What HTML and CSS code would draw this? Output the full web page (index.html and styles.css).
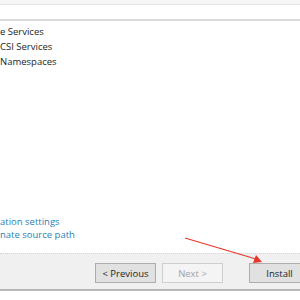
FILE: index.html
```html
<!DOCTYPE html>
<html lang="en">

<head>
    <meta charset="UTF-8">
    <title>Confirm installation selections</title>
    <link rel="stylesheet" href="styles.css">
</head>

<body>
    <div class="wizard">
        <div class="top-strip"></div>
        <div class="header"></div>
        <div class="features">
            <div class="feature">e Services</div>
            <div class="feature">CSI Services</div>
            <div class="feature">Namespaces</div>
        </div>
        <div class="links">
            <a class="link">ation settings</a>
            <a class="link">nate source path</a>
        </div>
        <div class="footer">
            <button class="btn">&lt; Previous</button>
            <button class="btn" disabled>Next &gt;</button>
            <button class="btn install">Install</button>
        </div>
        <div class="bottom-edge"></div>
    </div>
    <svg class="arrow" width="300" height="300" viewBox="0 0 300 300">
        <line x1="185" y1="238" x2="256" y2="259" stroke="#e8352c" stroke-width="1.2"/>
        <polygon points="262,262 253,263 256,255" fill="#e8352c"/>
    </svg>
</body>

</html>
```

FILE: styles.css
```css
body {
    margin: 0;
    background: #fff;
    font-family: "Open Sans", "Noto Sans", sans-serif;
    font-size: 9.5px;
    color: #1e1e1e;
}
.wizard {
    width: 300px;
    height: 300px;
    display: flex;
    flex-direction: column;
    overflow: hidden;
}
.top-strip {
    height: 4px;
    background: #f6f6f6;
}
.header {
    height: 14px;
    border-top: 1px solid #e6e6e6;
    border-bottom: 2px solid #dadada;
    background: #fff;
}
.features {
    padding-top: 3px;
}
.feature {
    height: 15px;
    line-height: 15px;
    white-space: nowrap;
}
.links {
    margin-top: auto;
    margin-bottom: 12px;
    display: flex;
    flex-direction: column;
}
.link {
    height: 13px;
    line-height: 13px;
    color: #2a7fb6;
    white-space: nowrap;
}
.footer {
    height: 36px;
    border-top: 1px dotted #d4d4d4;
    background: #f0f0f0;
    display: flex;
    align-items: flex-start;
    justify-content: flex-end;
    padding-top: 9px;
    box-sizing: border-box;
    margin-right: -10px;
}
.btn {
    width: 61px;
    height: 20px;
    margin: 0 0 0 6px;
    padding: 0;
    border: 1px solid #adadad;
    background: #e1e1e1;
    font-family: inherit;
    font-size: 9.5px;
    color: #1e1e1e;
}
.btn:disabled {
    border-color: #cfcfcf;
    background: #f4f4f4;
    color: #a3a3a3;
}
.install {
    margin-left: 26px;
}
.bottom-edge {
    height: 2px;
    margin-bottom: 9px;
    background: #b8b8b8;
}
.arrow {
    position: absolute;
    left: 0;
    top: 0;
}
```
